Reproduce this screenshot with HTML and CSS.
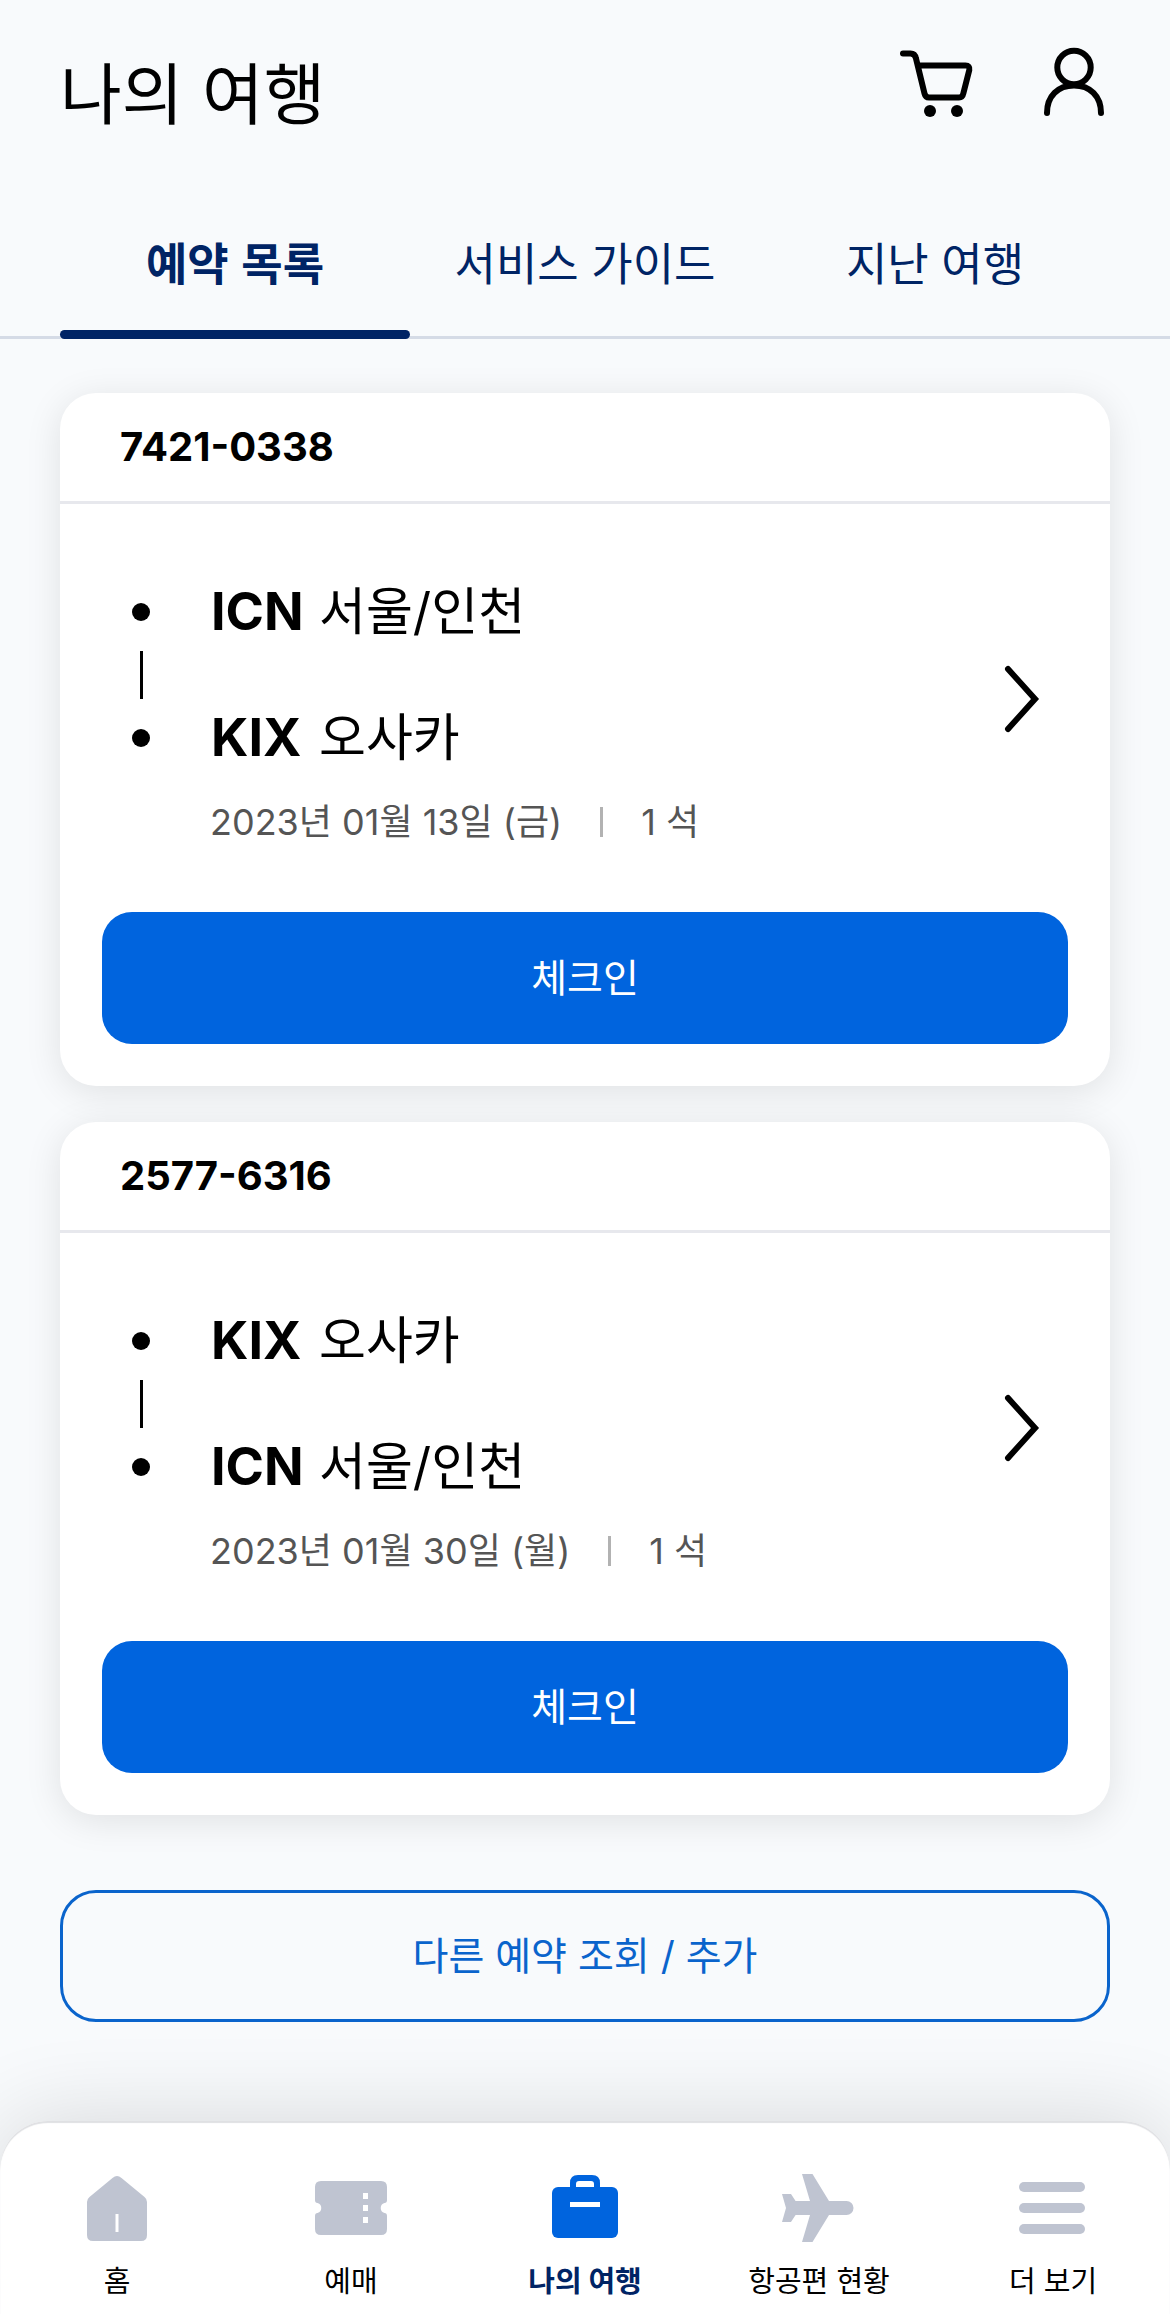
FILE: index.html
```html
<!DOCTYPE html>
<html lang="ko">
<head>
<meta charset="utf-8">
<meta name="viewport" content="width=device-width, initial-scale=1">
<title>나의 여행</title>
<link rel="stylesheet" href="styles.css">
</head>
<body>
<header class="header">
  <h1 class="title">나의 여행</h1>
  <div class="actions">
    <button class="icon-button" type="button" aria-label="장바구니">
      <svg class="icon line" viewBox="0 0 72 72" aria-hidden="true">
        <path d="M3 5.500H10.500Q15 5.500 16 10.500L24.500 45.500Q25.500 49.500 29 49.500H59Q62.500 49.500 63.300 45.500L69.300 22Q70 17.500 65.500 17.500H18"/>
        <circle class="solid" cx="30" cy="63" r="6"/><circle class="solid" cx="57" cy="63" r="6"/>
      </svg>
    </button>
    <button class="icon-button" type="button" aria-label="내 정보">
      <svg class="icon line" viewBox="0 0 72 72" aria-hidden="true">
        <circle cx="36" cy="19.500" r="16.700"/>
        <path d="M9 65C9 48 20 37.500 36 37.500S63 48 63 65"/>
      </svg>
    </button>
  </div>
</header>
<nav class="tabs" aria-label="여행 구분">
  <a class="tab active" href="#list" aria-current="page">예약 목록</a>
  <a class="tab" href="#guide">서비스 가이드</a>
  <a class="tab" href="#past">지난 여행</a>
</nav>
<main class="main" id="list">
  <article class="card">
    <h2 class="number">7421-0338</h2>
    <a class="trip" href="#trip-1">
      <div class="details">
        <div class="stop"><span class="dot"></span><b class="code">ICN</b><span>서울/인천</span></div>
        <div class="connector"></div>
        <div class="stop"><span class="dot"></span><b class="code">KIX</b><span>오사카</span></div>
        <div class="meta"><span>2023년 01월 13일 (금)</span><span class="divider"></span><span>1 석</span></div>
      </div>
      <svg class="chevron" viewBox="0 0 48 72" aria-hidden="true"><path d="M6 6L33 36L6 66"/></svg>
    </a>
    <button class="button primary" type="button">체크인</button>
  </article>
  <article class="card">
    <h2 class="number">2577-6316</h2>
    <a class="trip" href="#trip-2">
      <div class="details">
        <div class="stop"><span class="dot"></span><b class="code">KIX</b><span>오사카</span></div>
        <div class="connector"></div>
        <div class="stop"><span class="dot"></span><b class="code">ICN</b><span>서울/인천</span></div>
        <div class="meta"><span>2023년 01월 30일 (월)</span><span class="divider"></span><span>1 석</span></div>
      </div>
      <svg class="chevron" viewBox="0 0 48 72" aria-hidden="true"><path d="M6 6L33 36L6 66"/></svg>
    </a>
    <button class="button primary" type="button">체크인</button>
  </article>
  <button class="button outline" type="button">다른 예약 조회 / 추가</button>
</main>
<nav class="bottom-nav" aria-label="주 메뉴">
  <a class="nav-item" href="#home">
    <svg class="icon" viewBox="0 0 72 72" aria-hidden="true"><path d="M31.500 6Q36 2 40.500 6L63.500 25Q66 27 66 30V63Q66 69 60 69H12Q6 69 6 63V30Q6 27 8.500 25Z"/><path class="cut" d="M34.500 42h3v18h-3z"/></svg>
    <span>홈</span>
  </a>
  <a class="nav-item" href="#book">
    <svg class="icon" viewBox="0 0 72 72" aria-hidden="true"><path d="M6 9H66Q72 9 72 15V28Q72 31 69.500 31A5.200 5.200 0 0 0 69.500 41Q72 41 72 44V57Q72 63 66 63H6Q0 63 0 57V44Q0 41 2.500 41A5.200 5.200 0 0 0 2.500 31Q0 31 0 28V15Q0 9 6 9Z"/><path class="cut" d="M48 21h5v6h-5zM48 33h5v6h-5zM48 45h5v6h-5z"/></svg>
    <span>예매</span>
  </a>
  <a class="nav-item active" href="#trips" aria-current="page">
    <svg class="icon" viewBox="0 0 72 72" aria-hidden="true"><rect x="3" y="15" width="66" height="51" rx="6"/><path d="M21 16V11Q21 3 29 3H43Q51 3 51 11V16H45V12Q45 9 42 9H30Q27 9 27 12V16Z"/><path class="cut" d="M21 30h30v5H21z"/></svg>
    <span>나의 여행</span>
  </a>
  <a class="nav-item" href="#flights">
    <svg class="icon" viewBox="0 0 72 72" aria-hidden="true"><path d="M19 2H29.500L46 29H63.500A7 7 0 0 1 63.500 43H46L29.500 70H19L27 43H12.600L8 50H-1L3 36L-1 22H8L12.600 29H27Z"/></svg>
    <span>항공편 현황</span>
  </a>
  <a class="nav-item" href="#more">
    <svg class="icon" viewBox="0 0 72 72" aria-hidden="true"><rect x="2" y="10" width="66" height="10" rx="5"/><rect x="2" y="31" width="66" height="10" rx="5"/><rect x="2" y="52" width="66" height="10" rx="5"/></svg>
    <span>더 보기</span>
  </a>
</nav>
</body>
</html>
```
FILE: styles.css
```css
* { box-sizing: border-box; }

body {
  margin: 0;
  min-height: 100vh;
  display: flex;
  flex-direction: column;
  background: #f8fafc;
  color: #000;
  font-family: Inter, "Noto Sans CJK KR", sans-serif;
}

a { color: inherit; text-decoration: none; }

button { font-family: inherit; cursor: pointer; }

.header {
  display: flex;
  justify-content: space-between;
  align-items: flex-start;
  padding: 48px 60px 54px;
}

.title {
  margin: 0;
  font-family: "Noto Sans CJK KR", sans-serif;
  font-size: 67px;
  font-weight: 400;
  line-height: 84px;
}

.actions { display: flex; gap: 66px; }

.icon-button {
  display: flex;
  padding: 0;
  border: 0;
  background: none;
}

.icon {
  display: block;
  width: 72px;
  height: 72px;
  overflow: visible;
  fill: #bfc4d1;
}

.icon.line {
  fill: none;
  stroke: #000;
  stroke-width: 6;
  stroke-linecap: round;
  stroke-linejoin: round;
}

.icon .solid { fill: #000; stroke: none; }

.icon .cut { fill: #fff; }

.tabs {
  display: flex;
  padding: 0 60px;
  border-bottom: 3px solid #d5dbe6;
}

.tab {
  position: relative;
  flex: 1;
  padding: 46px 0 44px;
  color: #002465;
  font-family: "Noto Sans CJK KR", sans-serif;
  font-size: 45px;
  line-height: 60px;
  text-align: center;
}

.tab.active { font-weight: 700; }

.tab.active::after {
  content: "";
  position: absolute;
  right: 0;
  bottom: -3px;
  left: 0;
  height: 9px;
  border-radius: 5px;
  background: #002465;
}

.main {
  display: flex;
  flex-direction: column;
  gap: 36px;
  padding: 54px 60px 99px;
}

.card {
  display: flex;
  flex-direction: column;
  padding-bottom: 42px;
  border-radius: 36px;
  background: #fff;
  box-shadow: 0 6px 36px rgba(0, 0, 0, 0.1);
}

.number {
  margin: 0;
  padding: 0 60px;
  border-bottom: 3px solid #e7e8ed;
  font-size: 40px;
  font-weight: 700;
  line-height: 108px;
}

.trip {
  display: flex;
  justify-content: space-between;
  align-items: center;
  margin-bottom: 18px;
  padding: 72px 60px 48px;
}

.stop {
  display: flex;
  align-items: center;
  font-size: 51px;
  line-height: 72px;
}

.dot {
  width: 18px;
  height: 18px;
  margin: 0 61px 0 12px;
  border-radius: 50%;
  background: #000;
}

.code {
  width: 108px;
  font-size: 52px;
  font-weight: 700;
}

.connector {
  width: 3px;
  height: 48px;
  margin: 3px 20px;
  background: #000;
}

.meta {
  display: flex;
  align-items: center;
  gap: 38px;
  margin-top: 24px;
  padding-left: 90px;
  color: #555;
  font-size: 36px;
  line-height: 48px;
}

.divider {
  width: 3px;
  height: 30px;
  background: #b2b2b2;
}

.chevron {
  width: 48px;
  height: 72px;
  margin-bottom: 24px;
  fill: none;
  stroke: #000;
  stroke-width: 6;
  stroke-linecap: round;
}

.button {
  height: 132px;
  font-size: 39px;
  line-height: 48px;
}

.primary {
  margin: 0 42px;
  border: 0;
  border-radius: 30px;
  background: #0064de;
  color: #fff;
}

.outline {
  margin-top: 39px;
  border: 3px solid #0a64cc;
  border-radius: 36px;
  background: transparent;
  color: #0a64cc;
}

.bottom-nav {
  position: sticky;
  bottom: 0;
  display: flex;
  margin-top: auto;
  padding: 51px 0 10px;
  border-radius: 48px 48px 0 0;
  background: #fff;
  box-shadow: inset 0 2px 1px #dfe0e3, 0 0 90px rgba(0, 0, 0, 0.14);
}

.nav-item {
  flex: 1;
  display: flex;
  flex-direction: column;
  align-items: center;
  gap: 16px;
  font-size: 29px;
  line-height: 44px;
}

.nav-item.active { color: #002465; font-weight: 700; }

.nav-item.active .icon { fill: #0064de; }
```
